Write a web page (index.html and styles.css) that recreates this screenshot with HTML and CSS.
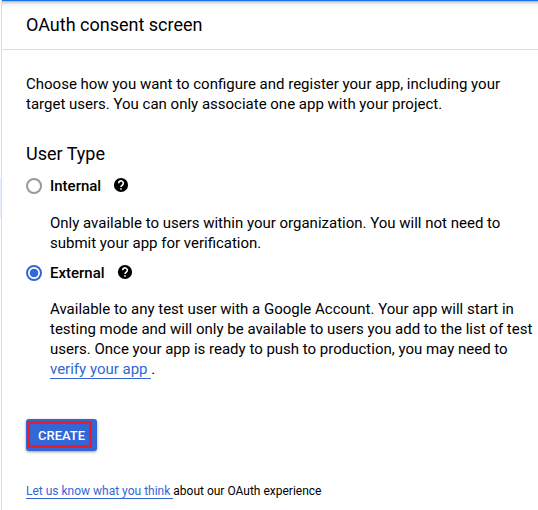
FILE: index.html
```html
<!DOCTYPE html>
<html lang="en">
<head>
<meta charset="utf-8">
<title>OAuth consent screen</title>
<link rel="stylesheet" href="styles.css">
</head>
<body>
<header class="header"><h1>OAuth consent screen</h1></header>
<main class="content">
  <p class="intro">Choose how you want to configure and register your app, including your<br>target users. You can only associate one app with your project.</p>
  <h2>User Type</h2>
  <div class="option">
    <span class="radio"></span><span class="label">Internal</span>
    <svg class="help" viewBox="0 0 16 16"><circle cx="8" cy="8" r="7.1"/><path d="M5.700 6.200a2.300 2.300 0 1 1 3.800 1.750C8.600 8.700 8 8.900 8 10"/><path d="M8 11.200v1.600"/></svg>
  </div>
  <p class="detail">Only available to users within your organization. You will not need to<br>submit your app for verification.</p>
  <div class="option">
    <span class="radio checked"></span><span class="label">External</span>
    <svg class="help" viewBox="0 0 16 16"><circle cx="8" cy="8" r="7.1"/><path d="M5.700 6.200a2.300 2.300 0 1 1 3.800 1.750C8.600 8.700 8 8.900 8 10"/><path d="M8 11.200v1.600"/></svg>
  </div>
  <p class="detail external">Available to any test user with a Google Account. Your app will start in<br>testing mode and will only be available to users you add to the list of test<br>users. Once your app is ready to push to production, you may need to<br><a>verify your app&nbsp;</a>.</p>
  <button class="create"><span>CREATE</span></button>
  <p class="feedback"><a>Let us know what you think&nbsp;</a>about our OAuth experience</p>
</main>
</body>
</html>
```

FILE: styles.css
```css
* { box-sizing: border-box; }
html { background: linear-gradient(#e8f0fe, #e8f0fe) 0 178px / 1px 40px no-repeat #fff; }
body {
  margin: 0 0 0 1px;
  height: 510px;
  overflow: hidden;
  border-left: 1px solid #dadce0;
  color: #000;
  font: 15px/20px Roboto, sans-serif;
}
h1, h2, p { margin: 0; font-weight: 400; }
.header {
  height: 50px;
  padding: 12px 24px;
  border-top: 1px solid #1a73e8;
  border-bottom: 1px solid #dadce0;
  background: linear-gradient(#b4b4b4, #e2e2e2 2px, #f8f8f8 4px, #fff 7px);
}
h1 { font-size: 18px; line-height: 24px; }
.content { padding: 24px 0 0 24px; white-space: nowrap; }
h2 { margin-top: 28px; font-size: 18px; line-height: 24px; }
.option { display: flex; align-items: center; height: 20px; margin-top: 10px; }
.radio { width: 16px; height: 16px; border: 2px solid #999; border-radius: 50%; }
.radio.checked { border-color: #3367d6; background: radial-gradient(circle, #3367d6 3.8px, #fff 4.7px); }
.label { margin-left: 8px; font-size: 15px; font-weight: 500; }
.help { width: 16px; height: 16px; margin: 0 0 2px 12px; }
.help path { fill: none; stroke: #fff; stroke-width: 1.6; }
.detail { margin: 17px 0 0 24px; }
.detail.external { margin-top: 16px; }
a { color: #3367d6; border-bottom: 1px solid #3367d6; }
.create {
  display: flex;
  width: 71px;
  height: 32px;
  margin-top: 40px;
  padding: 2px 5px 3px 1px;
  border: 0;
  border-radius: 3px;
  background: #3367d6;
  box-shadow: 0 1px 3px rgba(0, 0, 0, .4);
}
.create span {
  flex: 1;
  height: 27px;
  padding-left: 8px;
  border: 3px solid #ed1c24;
  color: #fff;
  font: 500 13px/23px Roboto, sans-serif;
  text-align: left;
}
.feedback { margin-top: 30px; font-size: 12px; }
```
